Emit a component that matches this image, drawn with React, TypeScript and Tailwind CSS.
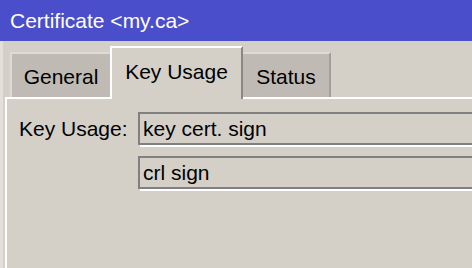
import React from "react";

export default function App() {
  return (
    <div
      className="w-[472px] h-[268px] overflow-hidden bg-[#d4d0c8] flex flex-col text-[21px] leading-none text-black"
      style={{ fontFamily: '"Liberation Sans", Arial, sans-serif' }}
    >
      <div className="h-[41px] shrink-0 bg-[#4b4ecb] text-white flex items-center pl-[10px] pb-[1px]">
        Certificate &lt;my.ca&gt;
      </div>
      <div className="flex-1 flex flex-col border-l-[3px] border-[#e3e0da]">
        <div className="h-[56px] shrink-0 flex items-end pl-[7px] relative z-10">
          <div className="w-[100px] h-[45px] bg-[#bfbbb4] border-t-2 border-l-2 border-[#dedbd4] flex items-center justify-center pt-[1px]">
            General
          </div>
          <div className="w-[133px] h-[53px] -mb-[2px] bg-[#d4d0c8] border-t-2 border-l-2 border-r-2 border-t-white border-l-white border-r-[#8a8883] flex items-start justify-center pt-[13px]">
            Key Usage
          </div>
          <div className="w-[88px] h-[45px] bg-[#bfbbb4] border-t-2 border-r-2 border-t-[#dedbd4] border-r-[#a3a09a] flex items-center justify-center pt-[1px]">
            Status
          </div>
        </div>
        <div className="flex-1 ml-[2px] border-t-2 border-l-2 border-white pt-[13px] pl-[12px]">
          <div className="grid grid-cols-[119px_400px] gap-y-[11px]">
            <div className="flex items-center h-[33px]">Key Usage:</div>
            <div className="h-[33px] border-2 border-[#808080] shadow-[2px_2px_0_#ffffff] flex items-center pl-[3px]">
              key cert. sign
            </div>
            <div />
            <div className="h-[33px] border-2 border-[#808080] shadow-[2px_2px_0_#ffffff] flex items-center pl-[3px]">
              crl sign
            </div>
          </div>
        </div>
      </div>
    </div>
  );
}
